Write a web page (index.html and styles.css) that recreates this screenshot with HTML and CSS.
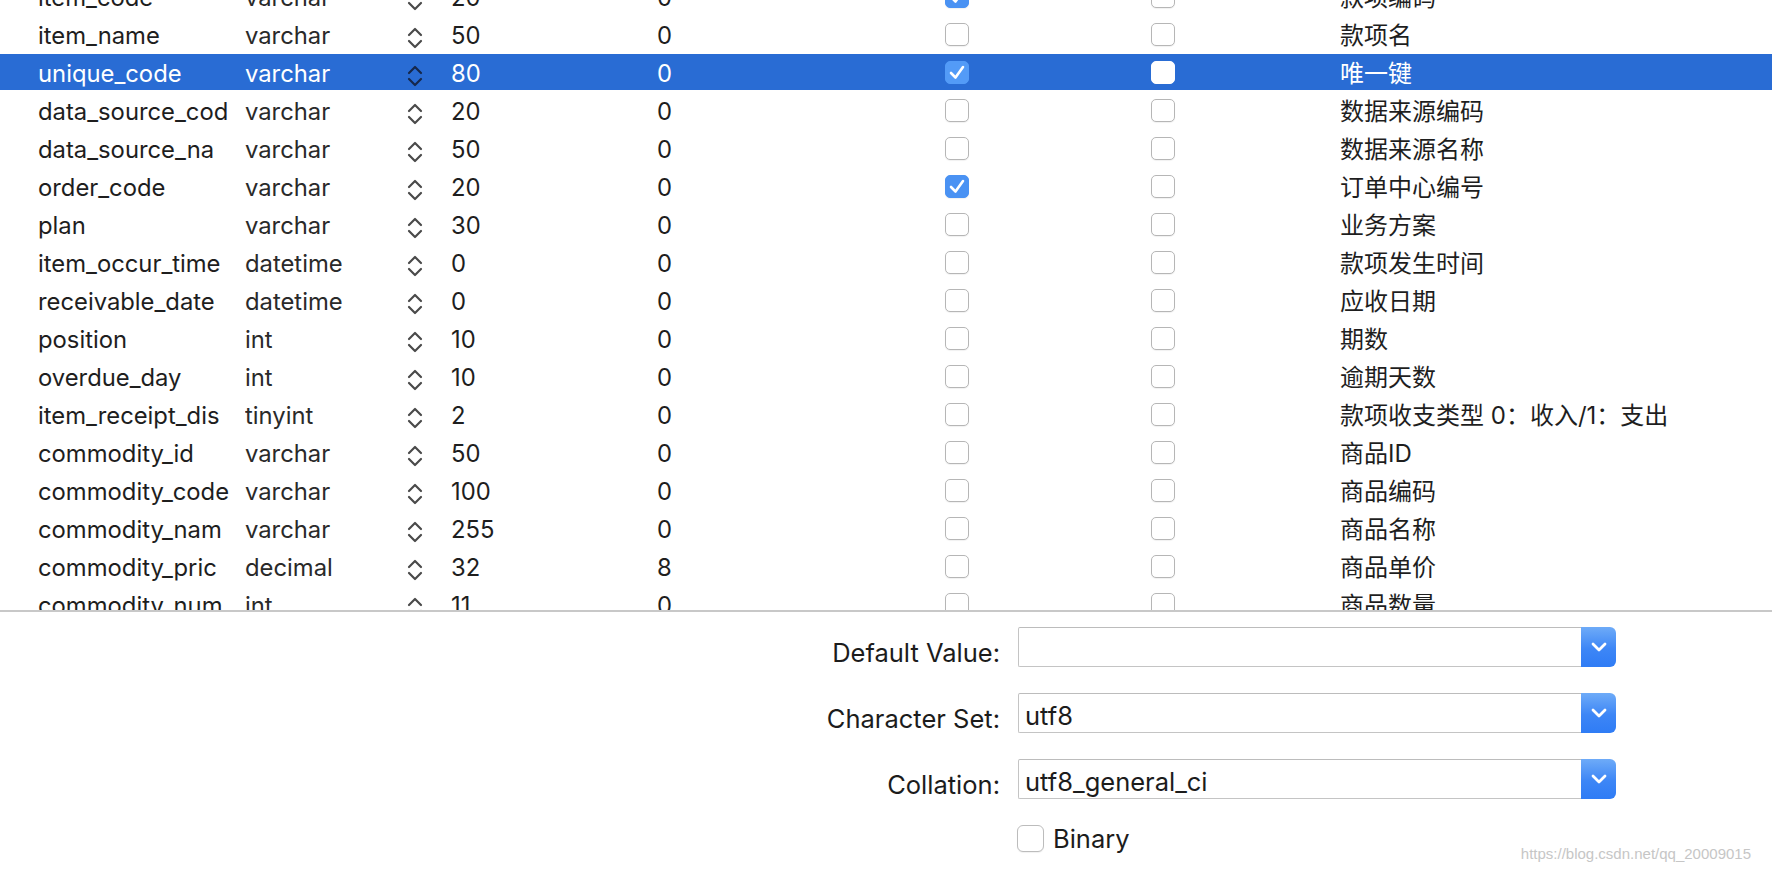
FILE: index.html
```html
<!DOCTYPE html>
<html>
<head>
<meta charset="utf-8">
<link rel="stylesheet" href="styles.css">
</head>
<body>
<div class="window">
  <div class="table">
    <div class="rows">
      <div class="row"><span class="t">item_code</span><span class="t type">varchar</span><span class="step"><svg width="16" height="22" viewBox="0 0 16 22"><polyline points="2,8 8,2 14,8"/><polyline points="2,14 8,20 14,14"/></svg></span><span class="t">20</span><span class="t">0</span><span class="cbc"><span class="cb on"><svg width="24" height="23" viewBox="0 0 24 23"><polyline points="6,12 10.5,16.5 18,6"/></svg></span></span><span class="cbc"><span class="cb"></span></span><span class="t cmt">款项编码</span></div>
      <div class="row"><span class="t">item_name</span><span class="t type">varchar</span><span class="step"><svg width="16" height="22" viewBox="0 0 16 22"><polyline points="2,8 8,2 14,8"/><polyline points="2,14 8,20 14,14"/></svg></span><span class="t">50</span><span class="t">0</span><span class="cbc"><span class="cb"></span></span><span class="cbc"><span class="cb"></span></span><span class="t cmt">款项名</span></div>
      <div class="row sel"><span class="t">unique_code</span><span class="t type">varchar</span><span class="step"><svg width="16" height="22" viewBox="0 0 16 22"><polyline points="2,8 8,2 14,8"/><polyline points="2,14 8,20 14,14"/></svg></span><span class="t">80</span><span class="t">0</span><span class="cbc"><span class="cb on"><svg width="24" height="23" viewBox="0 0 24 23"><polyline points="6,12 10.5,16.5 18,6"/></svg></span></span><span class="cbc"><span class="cb"></span></span><span class="t cmt">唯一键</span></div>
      <div class="row"><span class="t">data_source_cod</span><span class="t type">varchar</span><span class="step"><svg width="16" height="22" viewBox="0 0 16 22"><polyline points="2,8 8,2 14,8"/><polyline points="2,14 8,20 14,14"/></svg></span><span class="t">20</span><span class="t">0</span><span class="cbc"><span class="cb"></span></span><span class="cbc"><span class="cb"></span></span><span class="t cmt">数据来源编码</span></div>
      <div class="row"><span class="t">data_source_na</span><span class="t type">varchar</span><span class="step"><svg width="16" height="22" viewBox="0 0 16 22"><polyline points="2,8 8,2 14,8"/><polyline points="2,14 8,20 14,14"/></svg></span><span class="t">50</span><span class="t">0</span><span class="cbc"><span class="cb"></span></span><span class="cbc"><span class="cb"></span></span><span class="t cmt">数据来源名称</span></div>
      <div class="row"><span class="t">order_code</span><span class="t type">varchar</span><span class="step"><svg width="16" height="22" viewBox="0 0 16 22"><polyline points="2,8 8,2 14,8"/><polyline points="2,14 8,20 14,14"/></svg></span><span class="t">20</span><span class="t">0</span><span class="cbc"><span class="cb on"><svg width="24" height="23" viewBox="0 0 24 23"><polyline points="6,12 10.5,16.5 18,6"/></svg></span></span><span class="cbc"><span class="cb"></span></span><span class="t cmt">订单中心编号</span></div>
      <div class="row"><span class="t">plan</span><span class="t type">varchar</span><span class="step"><svg width="16" height="22" viewBox="0 0 16 22"><polyline points="2,8 8,2 14,8"/><polyline points="2,14 8,20 14,14"/></svg></span><span class="t">30</span><span class="t">0</span><span class="cbc"><span class="cb"></span></span><span class="cbc"><span class="cb"></span></span><span class="t cmt">业务方案</span></div>
      <div class="row"><span class="t">item_occur_time</span><span class="t type">datetime</span><span class="step"><svg width="16" height="22" viewBox="0 0 16 22"><polyline points="2,8 8,2 14,8"/><polyline points="2,14 8,20 14,14"/></svg></span><span class="t">0</span><span class="t">0</span><span class="cbc"><span class="cb"></span></span><span class="cbc"><span class="cb"></span></span><span class="t cmt">款项发生时间</span></div>
      <div class="row"><span class="t">receivable_date</span><span class="t type">datetime</span><span class="step"><svg width="16" height="22" viewBox="0 0 16 22"><polyline points="2,8 8,2 14,8"/><polyline points="2,14 8,20 14,14"/></svg></span><span class="t">0</span><span class="t">0</span><span class="cbc"><span class="cb"></span></span><span class="cbc"><span class="cb"></span></span><span class="t cmt">应收日期</span></div>
      <div class="row"><span class="t">position</span><span class="t type">int</span><span class="step"><svg width="16" height="22" viewBox="0 0 16 22"><polyline points="2,8 8,2 14,8"/><polyline points="2,14 8,20 14,14"/></svg></span><span class="t">10</span><span class="t">0</span><span class="cbc"><span class="cb"></span></span><span class="cbc"><span class="cb"></span></span><span class="t cmt">期数</span></div>
      <div class="row"><span class="t">overdue_day</span><span class="t type">int</span><span class="step"><svg width="16" height="22" viewBox="0 0 16 22"><polyline points="2,8 8,2 14,8"/><polyline points="2,14 8,20 14,14"/></svg></span><span class="t">10</span><span class="t">0</span><span class="cbc"><span class="cb"></span></span><span class="cbc"><span class="cb"></span></span><span class="t cmt">逾期天数</span></div>
      <div class="row"><span class="t">item_receipt_dis</span><span class="t type">tinyint</span><span class="step"><svg width="16" height="22" viewBox="0 0 16 22"><polyline points="2,8 8,2 14,8"/><polyline points="2,14 8,20 14,14"/></svg></span><span class="t">2</span><span class="t">0</span><span class="cbc"><span class="cb"></span></span><span class="cbc"><span class="cb"></span></span><span class="t cmt">款项收支类型 0：收入/1：支出</span></div>
      <div class="row"><span class="t">commodity_id</span><span class="t type">varchar</span><span class="step"><svg width="16" height="22" viewBox="0 0 16 22"><polyline points="2,8 8,2 14,8"/><polyline points="2,14 8,20 14,14"/></svg></span><span class="t">50</span><span class="t">0</span><span class="cbc"><span class="cb"></span></span><span class="cbc"><span class="cb"></span></span><span class="t cmt">商品ID</span></div>
      <div class="row"><span class="t">commodity_code</span><span class="t type">varchar</span><span class="step"><svg width="16" height="22" viewBox="0 0 16 22"><polyline points="2,8 8,2 14,8"/><polyline points="2,14 8,20 14,14"/></svg></span><span class="t">100</span><span class="t">0</span><span class="cbc"><span class="cb"></span></span><span class="cbc"><span class="cb"></span></span><span class="t cmt">商品编码</span></div>
      <div class="row"><span class="t">commodity_nam</span><span class="t type">varchar</span><span class="step"><svg width="16" height="22" viewBox="0 0 16 22"><polyline points="2,8 8,2 14,8"/><polyline points="2,14 8,20 14,14"/></svg></span><span class="t">255</span><span class="t">0</span><span class="cbc"><span class="cb"></span></span><span class="cbc"><span class="cb"></span></span><span class="t cmt">商品名称</span></div>
      <div class="row"><span class="t">commodity_pric</span><span class="t type">decimal</span><span class="step"><svg width="16" height="22" viewBox="0 0 16 22"><polyline points="2,8 8,2 14,8"/><polyline points="2,14 8,20 14,14"/></svg></span><span class="t">32</span><span class="t">8</span><span class="cbc"><span class="cb"></span></span><span class="cbc"><span class="cb"></span></span><span class="t cmt">商品单价</span></div>
      <div class="row"><span class="t">commodity_num</span><span class="t type">int</span><span class="step"><svg width="16" height="22" viewBox="0 0 16 22"><polyline points="2,8 8,2 14,8"/><polyline points="2,14 8,20 14,14"/></svg></span><span class="t">11</span><span class="t">0</span><span class="cbc"><span class="cb"></span></span><span class="cbc"><span class="cb"></span></span><span class="t cmt">商品数量</span></div>
    </div>
  </div>
  <div class="sep"></div>
  <div class="panel">
    <div class="label">Default Value:</div>
    <div class="select"><div class="field"></div><div class="btn"><svg width="16" height="10" viewBox="0 0 16 10"><polyline points="2,2 8,8 14,2"/></svg></div></div>
    <div class="label">Character Set:</div>
    <div class="select"><div class="field">utf8</div><div class="btn"><svg width="16" height="10" viewBox="0 0 16 10"><polyline points="2,2 8,8 14,2"/></svg></div></div>
    <div class="label">Collation:</div>
    <div class="select"><div class="field">utf8_general_ci</div><div class="btn"><svg width="16" height="10" viewBox="0 0 16 10"><polyline points="2,2 8,8 14,2"/></svg></div></div>
    <div class="label-empty"></div>
    <div class="check-row"><span class="cb big"></span><span class="check-text">Binary</span></div>
  </div>
  <div class="watermark">https://blog.csdn.net/qq_20009015</div>
</div>
</body>
</html>
```
FILE: styles.css
```css
html, body {
  margin: 0;
  padding: 0;
  background: #ffffff;
}
body {
  font-family: Inter, "Noto Sans CJK SC", sans-serif;
  overflow: hidden;
}
.window {
  position: relative;
  width: 1772px;
  height: 878px;
  overflow: hidden;
  background: #ffffff;
}
.table {
  height: 610px;
  overflow: hidden;
}
.rows {
  margin-top: -22px;
  display: flex;
  flex-direction: column;
  gap: 2px;
}
.row {
  height: 36px;
  display: grid;
  grid-template-columns: 207px 162px 44px 206px 288px 206px 189px 1fr;
  padding-left: 38px;
  align-items: center;
  font-size: 23.8px;
  line-height: 36px;
  color: #1e1e1e;
  white-space: nowrap;
}
.row > .t {
  display: block;
  height: 36px;
  box-sizing: border-box;
  padding-top: 2px;
  overflow: hidden;
}
.row .type {
  color: #2a2a2a;
}
.row.sel {
  background: #296cd4;
  color: #ffffff;
}
.row.sel .type {
  color: #ffffff;
}
.step {
  color: #4a4a4a;
  height: 36px;
  display: flex;
  align-items: center;
}
.step svg {
  display: block;
  margin-top: 8px;
}
.step polyline {
  fill: none;
  stroke: currentColor;
  stroke-width: 2.2;
  stroke-linecap: round;
  stroke-linejoin: round;
}
.row.sel .step {
  color: #16284b;
}
.row > .cmt {
  font-size: 24px;
}
.cbc {
  display: flex;
  align-items: center;
  height: 36px;
  padding-top: 1px;
  box-sizing: border-box;
}
.cb {
  display: block;
  width: 24px;
  height: 23px;
  box-sizing: border-box;
  border: 1px solid #b6b6b6;
  border-radius: 5px;
  background: #ffffff;
  box-shadow: 0 1px 1px rgba(0, 0, 0, 0.06);
}
.cb svg {
  display: block;
  margin: -1px;
}
.cb polyline {
  fill: none;
  stroke: #ffffff;
  stroke-width: 2.6;
  stroke-linecap: round;
  stroke-linejoin: round;
}
.cb.on {
  background: #4a92f3;
  border-color: #4a92f3;
}
.row.sel .cb {
  border-color: #ffffff;
  box-shadow: none;
}
.row.sel .cb.on {
  background: #539bf7;
  border-color: #539bf7;
}
.sep {
  height: 2px;
  background: #c8c8c8;
}
.panel {
  display: grid;
  grid-template-columns: 1000px 598px;
  grid-template-rows: 40px 40px 40px 27px;
  column-gap: 18px;
  row-gap: 26px;
  padding-top: 15px;
}
.label {
  height: 40px;
  box-sizing: border-box;
  padding-top: 10px;
  display: flex;
  align-items: center;
  justify-content: flex-end;
  font-size: 25.5px;
  color: #1c1c1c;
  white-space: nowrap;
}
.select {
  display: flex;
  height: 40px;
}
.field {
  flex: 1;
  box-sizing: border-box;
  border: 1px solid #c4c4c4;
  border-top-color: #bcbcbc;
  border-right: none;
  border-radius: 2px 0 0 2px;
  padding: 4px 0 0 6px;
  display: flex;
  align-items: center;
  font-size: 25.5px;
  color: #1c1c1c;
  background: #ffffff;
}
.btn {
  width: 35px;
  height: 40px;
  border-radius: 0 6px 6px 0;
  background: linear-gradient(#6eabf8, #3d86f6 55%, #2f7cf5);
  display: flex;
  align-items: center;
  justify-content: center;
}
.btn polyline {
  fill: none;
  stroke: #ffffff;
  stroke-width: 2.8;
  stroke-linecap: round;
  stroke-linejoin: round;
}
.check-row {
  display: flex;
  align-items: center;
  gap: 9px;
  margin-left: -1px;
}
.cb.big {
  width: 27px;
  height: 27px;
  border-radius: 6px;
  border-color: #bcbcbc;
}
.check-text {
  font-size: 25.5px;
  color: #1c1c1c;
}
.watermark {
  position: absolute;
  right: 21px;
  top: 845px;
  font-family: "Liberation Sans", sans-serif;
  font-size: 15px;
  color: #c6c6c6;
  white-space: nowrap;
}
```
